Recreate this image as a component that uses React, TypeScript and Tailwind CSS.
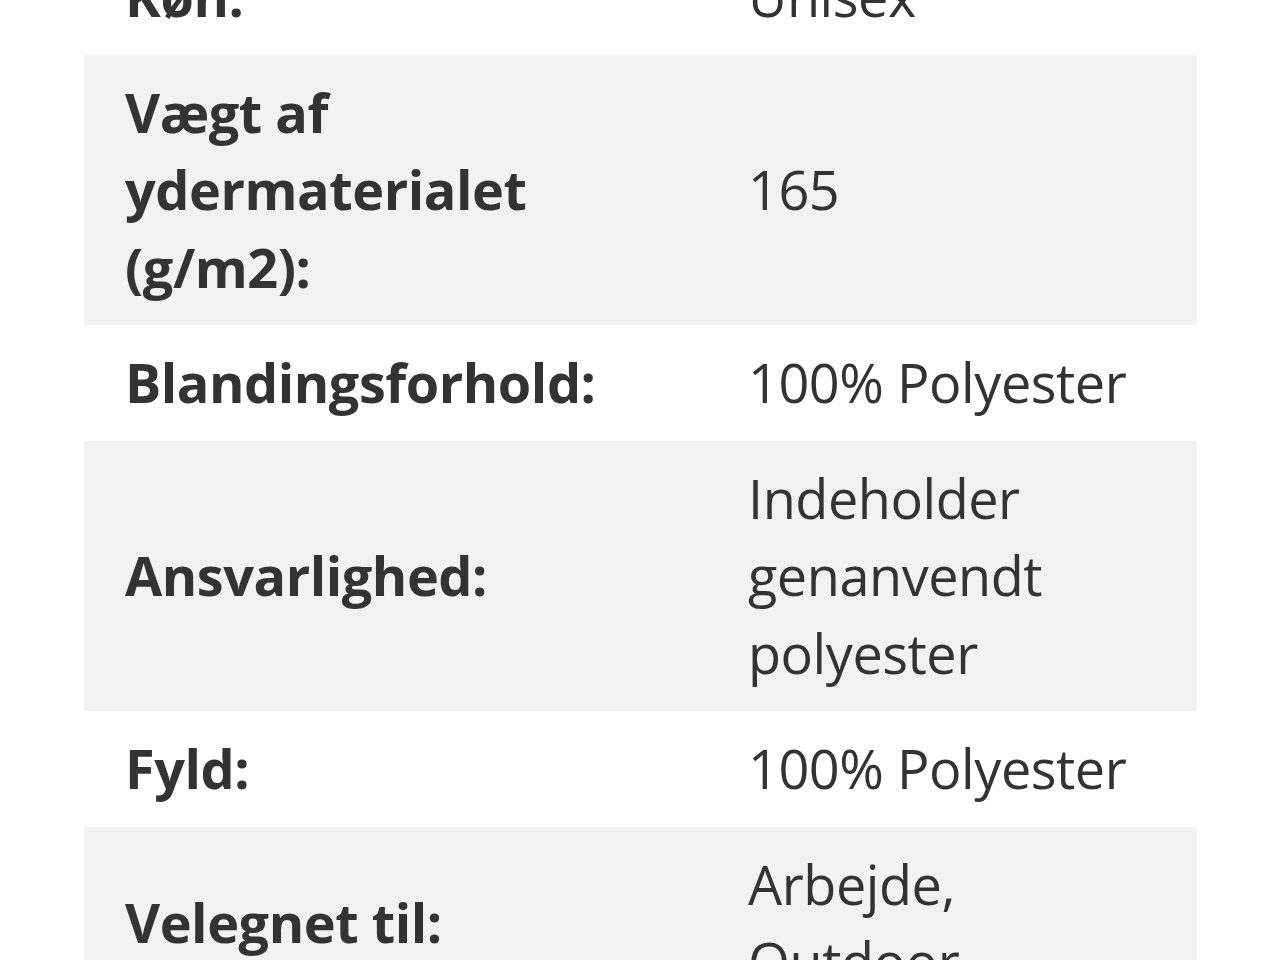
import React from "react";

const rows: { k: string; v: string; gray: boolean }[] = [
  { k: "Køn:", v: "Unisex", gray: false },
  { k: "Vægt af ydermaterialet (g/m2):", v: "165", gray: true },
  { k: "Blandingsforhold:", v: "100% Polyester", gray: false },
  { k: "Ansvarlighed:", v: "Indeholder genanvendt polyester", gray: true },
  { k: "Fyld:", v: "100% Polyester", gray: false },
  { k: "Velegnet til:", v: "Arbejde, Outdoor", gray: true },
];

export default function App() {
  return (
    <div
      className="w-[1280px] h-[960px] overflow-hidden bg-white text-[#333333]"
      style={{ fontFamily: '"Open Sans", sans-serif' }}
    >
      <div className="-mt-[61px] ml-[84px] w-[1113px] flex flex-col">
        {rows.map((r, i) => (
          <div
            key={i}
            className={`grid grid-cols-[623px_490px] ${r.gray ? "bg-[#f2f2f2]" : "bg-white"}`}
          >
            <div className="flex items-center px-[41px] py-[19px] text-[54px] leading-[77.5px] tracking-[-0.45px] font-bold">
              {r.k}
            </div>
            <div className="flex items-center px-[41px] py-[19px] text-[54px] leading-[77.5px] tracking-[-0.45px] font-normal">
              {r.v}
            </div>
          </div>
        ))}
      </div>
    </div>
  );
}
